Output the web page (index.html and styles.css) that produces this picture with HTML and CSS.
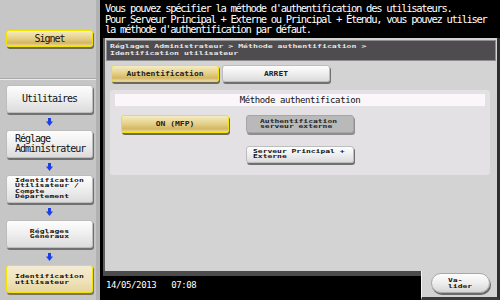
FILE: index.html
```html
<!DOCTYPE html>
<html lang="fr">
<head>
<meta charset="utf-8">
<title>Méthode authentification</title>
<link rel="stylesheet" href="styles.css">
</head>
<body>
<div class="screen">
  <aside class="side">
    <div class="side-top">
      <div class="btn yellow signet">Signet</div>
    </div>
    <nav class="steps">
      <div class="btn white big center">Utilitaires</div>
      <div class="arrow"><svg width="7" height="8" viewBox="0 0 7 8"><rect x="2" y="0" width="3" height="4" fill="#1a3ee8"/><polygon points="0,3.5 7,3.5 3.5,8" fill="#1a3ee8"/></svg></div>
      <div class="btn white big left">Réglage<br>Administrateur</div>
      <div class="arrow"><svg width="7" height="8" viewBox="0 0 7 8"><rect x="2" y="0" width="3" height="4" fill="#1a3ee8"/><polygon points="0,3.5 7,3.5 3.5,8" fill="#1a3ee8"/></svg></div>
      <div class="btn white tiny left"><span class="sq sq55">Identification<br>Utilisateur /<br>Compte<br>Département</span></div>
      <div class="arrow"><svg width="7" height="8" viewBox="0 0 7 8"><rect x="2" y="0" width="3" height="4" fill="#1a3ee8"/><polygon points="0,3.5 7,3.5 3.5,8" fill="#1a3ee8"/></svg></div>
      <div class="btn white tiny center"><span class="sq sq55">Réglages<br>Généraux</span></div>
      <div class="arrow"><svg width="7" height="8" viewBox="0 0 7 8"><rect x="2" y="0" width="3" height="4" fill="#1a3ee8"/><polygon points="0,3.5 7,3.5 3.5,8" fill="#1a3ee8"/></svg></div>
      <div class="btn pale tiny left"><span class="sq sq6">Identification<br>utilisateur</span></div>
    </nav>
  </aside>
  <main class="right">
    <header class="msg">Vous pouvez spécifier la méthode d'authentification des utilisateurs.<br>Pour Serveur Principal + Externe ou Principal + Étendu, vous pouvez utiliser<br>la méthode d'authentification par défaut.</header>
    <section class="panel">
      <div class="crumb"><span class="sq sq6">Réglages Administrateur &gt; Méthode authentification &gt;<br>Identification utilisateur</span></div>
      <div class="tabs">
        <div class="btn yellow tab"><span class="sq sq1">Authentification</span></div>
        <div class="btn white tab"><span class="sq sq1">ARRET</span></div>
      </div>
      <div class="box">
        <div class="box-title">Méthode authentification</div>
        <div class="choices">
          <div class="btn yellow choice"><span class="sq sq1">ON (MFP)</span></div>
          <div class="btn disabled choice two"><span class="sq sq55">Authentification<br>serveur externe</span></div>
          <div class="spacer"></div>
          <div class="btn white choice two dark"><span class="sq sq55">Serveur Principal +<br>Externe</span></div>
        </div>
      </div>
    </section>
    <footer class="foot">
      <div class="clock"><span class="date">14/05/2013</span><span class="time">07:08</span></div>
      <div class="okcell"><div class="ok"><span class="sq sq6 oktext">Va-<br>lider</span></div></div>
    </footer>
  </main>
</div>
</body>
</html>
```

FILE: styles.css
```css
* { box-sizing: border-box; margin: 0; padding: 0; }

body {
  width: 500px;
  height: 300px;
  overflow: hidden;
  background: #000;
  font-family: "DejaVu Sans Mono", "Liberation Mono", monospace;
  color: #111;
}

.screen {
  display: flex;
  width: 500px;
  height: 300px;
}

/* squashed pixel-font text: short, wide glyphs */
.sq {
  display: block;
  line-height: 1.17;
  transform-origin: left center;
}
.sq6 { transform: scaleY(0.63); }
.sq55 { transform: scaleY(0.58); }
.sq1 { transform: scaleY(0.8); transform-origin: center center; }

/* ---------- left column ---------- */
.side {
  width: 100px;
  height: 300px;
  background: #c6c6c6;
  border-right: 4px solid #b2b2b2;
  display: flex;
  flex-direction: column;
}

.side-top {
  height: 80px;
  padding: 30px 0 0 6px;
  border-bottom: 1px solid #ececec;
  box-shadow: 0 -1px 0 #aaaaaa inset;
}

.steps {
  display: flex;
  flex-direction: column;
  padding: 5px 0 0 6px;
}

.btn {
  width: 87px;
  border-radius: 3px;
  display: flex;
  flex-direction: column;
  justify-content: center;
}

.white {
  background: linear-gradient(#fdfdfd, #f0f0f0 45%, #dcdcdc);
  border: 1px solid #bdbdbd;
  box-shadow: 1px 2px 0 #707070;
}

.yellow {
  background: linear-gradient(#f6ecc4, #e4cf86 50%, #d4b664 80%, #e8d8a0);
  border: 1.5px solid #f2e400;
  box-shadow: 1px 2px 0 #6e6a58;
}

.pale {
  background: linear-gradient(#f4ecd4, #efe2b8 60%, #e6d4a0);
  border: 1.5px solid #f2e400;
  box-shadow: 1px 2px 0 #7a7460;
}

.disabled {
  background: #b9b9b9;
  border: 1px solid #a6a6a6;
  box-shadow: 1px 2px 0 #8e8e8e;
  color: #dedede;
}

.signet {
  height: 17px;
  font-size: 10px;
  letter-spacing: -1px;
  text-align: center;
  align-items: center;
}

.steps .btn { height: 28px; }

.big {
  font-size: 10px;
  letter-spacing: -1px;
  line-height: 10px;
}

.tiny {
  font-size: 8px;
  letter-spacing: 0.1px;
  font-weight: bold;
}

.center { text-align: center; }
.center .sq { transform-origin: center center; }
.left { text-align: left; padding-left: 8px; }

.arrow {
  height: 17px;
  width: 87px;
  display: flex;
  justify-content: center;
  align-items: center;
}

/* ---------- right area ---------- */
.right {
  width: 397px;
  margin-left: 3px;
  display: flex;
  flex-direction: column;
}

.msg {
  height: 38px;
  color: #fff;
  font-size: 10.5px;
  letter-spacing: -1.3px;
  line-height: 10.5px;
  padding: 3px 0 0 2px;
  white-space: nowrap;
}

.panel {
  height: 233px;
  background: #d3d3d3;
  border-left: 2px solid #5c5c5c;
  border-right: 3px solid #2e2e2e;
  padding: 2px 1px 0 1px;
}

.crumb {
  height: 21px;
  background: #4e4c4e;
  border: 1px solid #8e8e8e;
  color: #e6e6e6;
  font-size: 8.2px;
  font-weight: bold;
  padding: 0 0 0 3px;
  white-space: nowrap;
  display: flex;
  flex-direction: column;
  justify-content: center;
}
.crumb .sq { transform-origin: left 40%; }

.tabs {
  display: flex;
  gap: 3px;
  margin: 4px 0 0 5px;
}

.tab {
  width: 108px;
  height: 17px;
  font-size: 8px;
  font-weight: bold;
  text-align: center;
  align-items: center;
  color: #222;
}

.box {
  width: 380px;
  height: 85px;
  margin: 8px 0 0 4px;
  background: #e3e1e3;
  border-radius: 3px;
  padding: 4px 5px;
}

.box-title {
  height: 12px;
  background: #faf6fa;
  font-size: 9px;
  letter-spacing: -0.4px;
  line-height: 12px;
  text-align: center;
  color: #111;
}

.choices {
  display: grid;
  grid-template-columns: 108px 108px;
  grid-template-rows: 18px 17px;
  column-gap: 17px;
  row-gap: 13px;
  margin: 9px 0 0 6px;
}

.choice {
  width: 108px;
  font-size: 8px;
  font-weight: bold;
  text-align: center;
  align-items: center;
  color: #222;
}

.two {
  text-align: left;
  align-items: flex-start;
  padding-left: 13px;
}

.dark {
  color: #111;
  padding-left: 6px;
}

/* ---------- footer ---------- */
.foot {
  height: 29px;
  display: flex;
}

.clock {
  flex: 1;
  background: #000;
  border-top: 5px solid #4c4c4c;
  color: #fff;
  font-size: 9px;
  letter-spacing: -0.4px;
  line-height: 9px;
  padding: 5px 0 0 3px;
  display: flex;
  gap: 15px;
}

.okcell {
  width: 79px;
  background: #d3d3d3;
  border-left: 1px solid #f4f4f4;
  border-right: 3px solid #2e2e2e;
  border-bottom: 3px solid #3a3a3a;
  padding: 2px 0 0 9px;
}

.ok {
  width: 59px;
  height: 20px;
  border-radius: 10px;
  background: linear-gradient(#fdfdfd, #eeeeee 50%, #d6d6d6);
  border: 1px solid #a8a8a8;
  box-shadow: 1px 2px 0 #6a6a6a;
  display: flex;
  justify-content: center;
  align-items: center;
}

.oktext {
  font-size: 8px;
  font-weight: bold;
  width: 25px;
  color: #111;
  transform-origin: center center;
}
```
